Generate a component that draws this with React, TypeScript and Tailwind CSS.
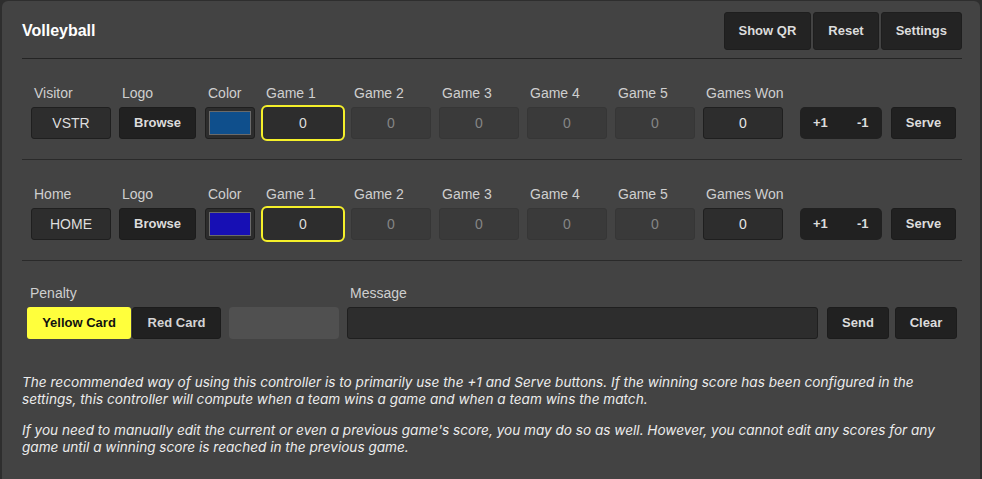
import React from "react";

const font = { fontFamily: '"Liberation Sans", Arial, sans-serif' };
const paraFont = { fontFamily: 'Inter, "Liberation Sans", Arial, sans-serif' };

function Label({ children }: { children: React.ReactNode }) {
  return (
    <div className="pl-[3px] mb-[5px] text-[14px] leading-[17px] text-[#cfcfcf] whitespace-nowrap">
      {children}
    </div>
  );
}

function TeamRow({ name, abbr, color }: { name: string; abbr: string; color: string }) {
  const games = ["Game 2", "Game 3", "Game 4", "Game 5"];
  return (
    <div className="flex items-end pl-[9px] pt-[26px] pb-[20px]">
      <div className="flex flex-col w-[80px]">
        <Label>{name}</Label>
        <div className="h-[32px] flex items-center justify-center rounded-[3px] bg-[#2d2d2d] border border-[#1f1f1f] text-[14px] text-[#dedede]">
          {abbr}
        </div>
      </div>
      <div className="flex flex-col w-[77px] ml-[8px]">
        <Label>Logo</Label>
        <button className="h-[32px] flex items-center justify-center rounded-[3px] bg-[#212121] border border-[#1c1c1c] text-[13px] font-bold text-[#dcdcdc]">
          Browse
        </button>
      </div>
      <div className="flex flex-col w-[50px] ml-[9px]">
        <Label>Color</Label>
        <div className="h-[32px] flex items-center justify-center rounded-[3px] bg-[#2d2d2d] border border-[#1f1f1f]">
          <div className="w-[42px] h-[24px] border border-[#6a6a6a]" style={{ backgroundColor: color }} />
        </div>
      </div>
      <div className="flex flex-col w-[80px] ml-[8px]">
        <Label>Game 1</Label>
        <div className="h-[32px] flex items-center justify-center rounded-[4px] bg-[#2d2d2d] outline-2 outline-[#f5f02a] text-[14px] text-[#dedede]">
          0
        </div>
      </div>
      {games.map((g) => (
        <div key={g} className="flex flex-col w-[80px] ml-[8px]">
          <Label>{g}</Label>
          <div className="h-[32px] flex items-center justify-center rounded-[3px] bg-[#3a3a3a] border border-[#363636] text-[14px] text-[#858585]">
            0
          </div>
        </div>
      ))}
      <div className="flex flex-col w-[80px] ml-[8px]">
        <Label>Games Won</Label>
        <div className="h-[32px] flex items-center justify-center rounded-[3px] bg-[#2d2d2d] border border-[#1f1f1f] text-[14px] text-[#e6e6e6]">
          0
        </div>
      </div>
      <div className="ml-[17px] w-[82px] h-[32px] flex items-center rounded-[5px] bg-[#212121] text-[13px] font-bold text-[#dcdcdc]">
        <span className="w-[44px] pl-[13px]">+1</span>
        <span className="pl-[13px]">-1</span>
      </div>
      <button className="ml-[9px] w-[65px] h-[32px] flex items-center justify-center rounded-[3px] bg-[#212121] border border-[#1c1c1c] text-[13px] font-bold text-[#dcdcdc]">
        Serve
      </button>
    </div>
  );
}

export default function App() {
  return (
    <div className="min-h-screen bg-[#2e2e2e] pt-[1px] pl-[2px] pr-[2px]" style={font}>
      <div className="rounded-[6px] bg-[#434343] pl-[20px] pr-[18px] pt-[10px] pb-[40px]">
        <div className="flex items-center justify-between h-[39px] pt-[1px]">
          <div className="text-[16px] font-bold text-white">Volleyball</div>
          <div className="flex gap-[2px]">
            {["Show QR", "Reset", "Settings"].map((b) => (
              <button
                key={b}
                className="h-[38px] px-[14px] rounded-[3px] bg-[#232323] border border-[#1e1e1e] text-[13px] font-bold text-[#dcdcdc]"
              >
                {b}
              </button>
            ))}
          </div>
        </div>
        <div className="mt-[8px] h-px bg-[#242424]" />
        <TeamRow name="Visitor" abbr="VSTR" color="#0f4f8c" />
        <div className="h-px bg-[#2a2a2a]" />
        <TeamRow name="Home" abbr="HOME" color="#170fb4" />
        <div className="h-px bg-[#2a2a2a]" />
        <div className="flex items-end pl-[5px] pr-[5px] pt-[24px]">
          <div className="flex flex-col">
            <Label>Penalty</Label>
            <div className="flex gap-[1px]">
              <button className="h-[32px] w-[104px] rounded-[3px] bg-[#ffff3c] text-[13px] font-bold text-[#111]">
                Yellow Card
              </button>
              <button className="h-[32px] w-[89px] rounded-[3px] bg-[#212121] border border-[#1c1c1c] text-[13px] font-bold text-[#d4d4d4]">
                Red Card
              </button>
            </div>
          </div>
          <div className="ml-[8px] h-[32px] w-[110px] rounded-[4px] bg-[#505050]" />
          <div className="ml-[8px] flex flex-col flex-1">
            <Label>Message</Label>
            <div className="h-[32px] rounded-[3px] bg-[#2d2d2d] border border-[#1f1f1f]" />
          </div>
          <button className="ml-[9px] h-[32px] w-[62px] rounded-[3px] bg-[#212121] border border-[#1c1c1c] text-[13px] font-bold text-[#dcdcdc]">
            Send
          </button>
          <button className="ml-[6px] h-[32px] w-[62px] rounded-[3px] bg-[#212121] border border-[#1c1c1c] text-[13px] font-bold text-[#dcdcdc]">
            Clear
          </button>
        </div>
        <div className="mt-[35px] italic text-[13.6px] leading-[17px] text-[#ececec]" style={paraFont}>
          <p>
            The recommended way of using this controller is to primarily use the +1 and Serve buttons. If the winning
            score has been configured in the settings, this controller will compute when a team wins a game and when a
            team wins the match.
          </p>
          <p className="mt-[14px]">
            If you need to manually edit the current or even a previous game's score, you may do so as well. However,
            you cannot edit any scores for any game until a winning score is reached in the previous game.
          </p>
        </div>
      </div>
    </div>
  );
}
